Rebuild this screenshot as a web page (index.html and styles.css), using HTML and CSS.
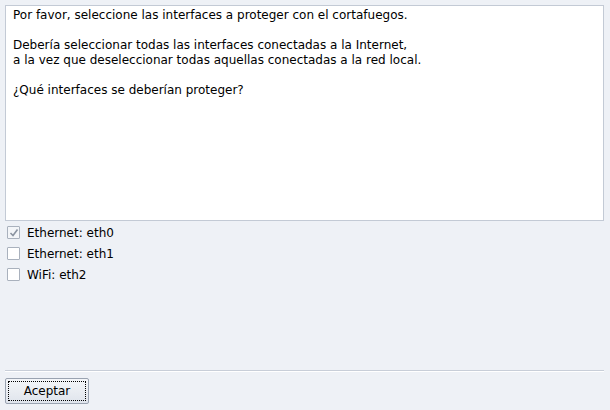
FILE: index.html
```html
<!DOCTYPE html>
<html>
<head>
<meta charset="utf-8">
<link rel="stylesheet" href="styles.css">
</head>
<body>
<div class="win">
  <div class="textbox">
    <p>Por favor, seleccione las interfaces a proteger con el cortafuegos.</p>
    <p>Debería seleccionar todas las interfaces conectadas a la Internet,<br>a la vez que deseleccionar todas aquellas conectadas a la red local.</p>
    <p>¿Qué interfaces se deberían proteger?</p>
  </div>
  <div class="checks">
    <label class="row"><span class="box checked"><svg width="10" height="10" viewBox="0 0 10 10"><path d="M1.5 5 L4 7.5 L8.5 1.5" fill="none" stroke="#8a93a0" stroke-width="1.6"/></svg></span>Ethernet: eth0</label>
    <label class="row"><span class="box"></span>Ethernet: eth1</label>
    <label class="row"><span class="box"></span>WiFi: eth2</label>
  </div>
  <div class="spacer"></div>
  <div class="sep"></div>
  <div class="buttons">
    <button class="btn"><span class="focus">Aceptar</span></button>
  </div>
</div>
</body>
</html>
```
FILE: styles.css
```css
html, body {
  margin: 0;
  padding: 0;
  width: 610px;
  height: 410px;
  background: #eef1f6;
  overflow: hidden;
}
.win {
  display: flex;
  flex-direction: column;
  height: 410px;
  box-sizing: border-box;
  padding: 5px 6px 6px 5px;
  font-family: "DejaVu Sans", sans-serif;
  font-size: 12px;
  color: #000;
}
.textbox {
  height: 216px;
  box-sizing: border-box;
  background: #fff;
  border: 1px solid #c3cad5;
  border-right-color: #c3cad5;
  padding: 2px 7px;
  line-height: 15px;
}
.textbox p {
  margin: 0 0 15px 0;
}
.checks {
  display: flex;
  flex-direction: column;
  padding-top: 1px;
}
.row {
  display: flex;
  align-items: center;
  height: 21px;
  gap: 7px;
  padding-left: 2px;
}
.box {
  width: 11px;
  height: 11px;
  border: 1px solid #a9b1bd;
  background: #fff;
  border-radius: 1px;
  display: flex;
  align-items: center;
  justify-content: center;
}
.box.checked {
  background: #f3f5f8;
}
.spacer {
  flex: 1;
}
.sep {
  height: 1px;
  background: #c8ced8;
  border-bottom: 1px solid #fff;
  margin-bottom: 6px;
}
.buttons {
  display: flex;
}
.btn {
  width: 84px;
  height: 26px;
  padding: 2px;
  border: 1px solid #9aa3b1;
  border-radius: 2px;
  background: linear-gradient(#f4f6f9, #dfe4ec);
  font-family: "DejaVu Sans", sans-serif;
  font-size: 12px;
  color: #000;
  display: flex;
}
.focus {
  flex: 1;
  border: 1px dotted #000;
  display: flex;
  align-items: center;
  justify-content: center;
}
```
